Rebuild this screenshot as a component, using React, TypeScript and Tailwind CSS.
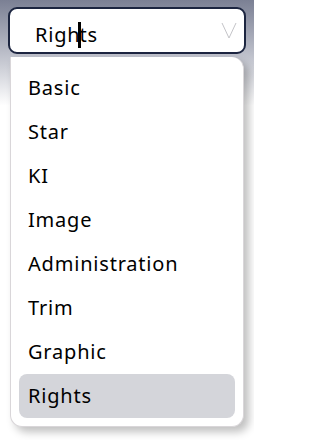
import { useState } from 'react';

const options = ['Basic', 'Star', 'KI', 'Image', 'Administration', 'Trim', 'Graphic', 'Rights'];

export default function App() {
  const [selected, setSelected] = useState('Rights');

  return (
    <div
      className="h-[440px] w-[254px] overflow-hidden bg-gradient-to-b from-[#7b8094] via-white via-[24%] to-white pt-[7px]"
      style={{ fontFamily: '"Noto Sans", sans-serif' }}
    >
      {/* input */}
      <div className="mx-[8px] flex h-[47px] items-center rounded-[9px] border-2 border-[#1c2540] bg-white pl-[25px] pr-[5px]">
        <span className="flex-1 text-[20px] leading-none tracking-[0.8px] text-black">
          Righ
          <span className="relative -mx-[2px] inline-block h-[26px] w-[3px] translate-y-[6px] bg-black align-baseline" />
          ts
        </span>
        <svg width="16" height="17" viewBox="0 0 16 17" fill="none" className="mr-[2px]">
          <path d="M1 1L8 16L15 1" stroke="#c4c4c8" strokeWidth="1" />
        </svg>
      </div>

      {/* list */}
      <ul className="mx-[10px] mt-[3px] rounded-b-[12px] rounded-tr-[12px] border-[1.5px] border-t-0 border-[#d9d6d9] bg-white px-[8px] pt-[9px] pb-[8px] shadow-[5px_5px_8px_rgba(0,0,0,0.25)]">
        {options.map((o) => (
          <li
            key={o}
            onClick={() => setSelected(o)}
            className={`flex h-[44px] items-center rounded-[8px] pl-[9px] text-[20px] tracking-[0.8px] text-black ${
              o === selected ? 'bg-[#d4d5da]' : ''
            }`}
          >
            {o}
          </li>
        ))}
      </ul>
    </div>
  );
}
